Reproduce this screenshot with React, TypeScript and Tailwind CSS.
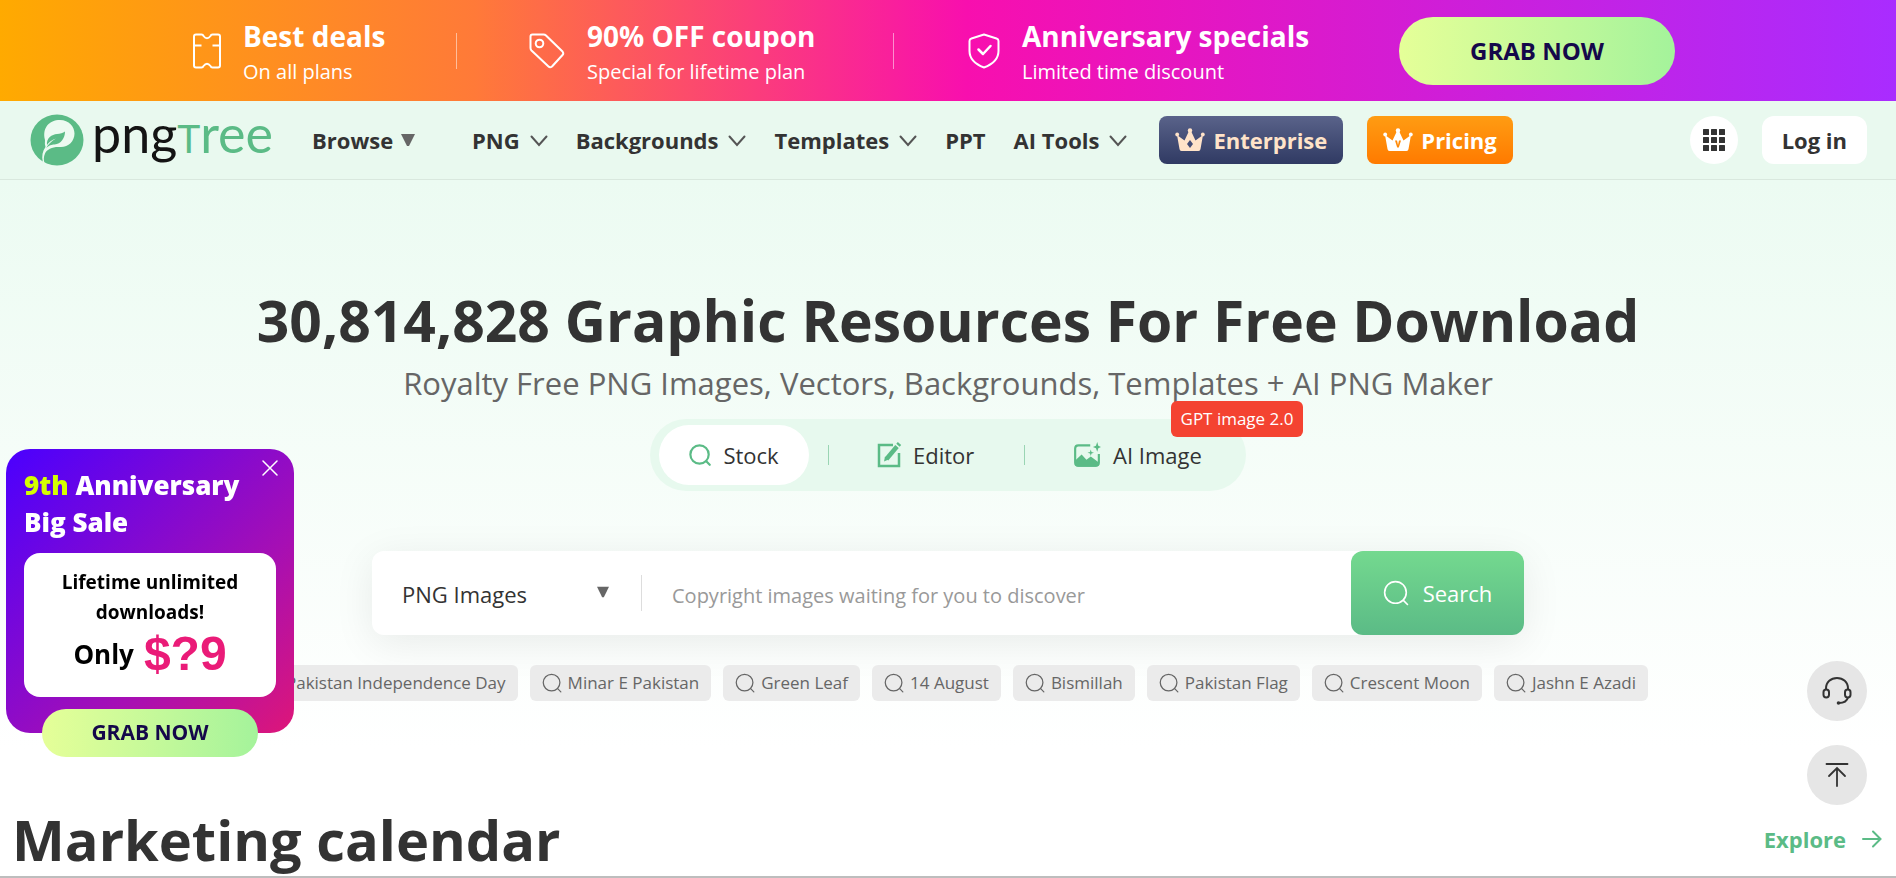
import React, { useState } from 'react';

const CHIPS = [
  'Pakistan Independence Day',
  'Minar E Pakistan',
  'Green Leaf',
  '14 August',
  'Bismillah',
  'Pakistan Flag',
  'Crescent Moon',
  'Jashn E Azadi',
];

const MENU = [
  { label: 'PNG', arrow: true },
  { label: 'Backgrounds', arrow: true },
  { label: 'Templates', arrow: true },
  { label: 'PPT', arrow: false },
  { label: 'AI Tools', arrow: true },
];

function SearchIcon({ className, stroke = 1.5 }: { className: string; stroke?: number }) {
  return (
    <svg viewBox="0 0 24 24" fill="none" stroke="currentColor" strokeWidth={stroke} strokeLinecap="round" className={className}>
      <circle cx="11.5" cy="11.5" r="10" />
      <path d="M18.8 18.8l3.8 3.8" />
    </svg>
  );
}

function ChevronIcon() {
  return (
    <svg viewBox="0 0 18 12" fill="none" stroke="#555" strokeWidth="2" strokeLinecap="round" className="mt-0.5 h-3 w-[18px]">
      <path d="M1.5 1.5L9 10L16.5 1.5" />
    </svg>
  );
}

function TriangleIcon({ className }: { className: string }) {
  return (
    <svg viewBox="0 0 14 12" fill="#666" className={className}>
      <path d="M0 0H14L8 12H6Z" />
    </svg>
  );
}

function TicketIcon() {
  return (
    <svg viewBox="0 0 28 36" fill="none" stroke="white" strokeWidth="2" strokeLinejoin="round" className="h-9 w-7">
      <path d="M3 1.5H8.5Q10 1.5 10.5 3Q14 7.500 17.5 3Q18 1.5 19.5 1.5H25Q27 1.5 27 3.5V32.5Q27 34.5 25 34.5H19.5Q18 34.5 17.5 33Q14 28.5 10.5 33Q10 34.5 8.5 34.5H3Q1 34.5 1 32.5V3.5Q1 1.5 3 1.5Z" />
      <path d="M1 12.5H8.5M19.5 12.5H27" />
    </svg>
  );
}

function TagIcon() {
  return (
    <svg viewBox="0 0 36 36" fill="none" stroke="white" strokeWidth="2" strokeLinejoin="round" className="size-9">
      <path d="M3.5 1.5H14.5Q16 1.5 17 2.5L33.5 18.5Q35 20.5 33.5 22L23 33.5Q21 35 19.5 33.5L2.5 17.5Q1.5 16.5 1.5 15V3.5Q1.5 1.5 3.5 1.5Z" />
      <circle cx="10.5" cy="10.5" r="3.8" />
    </svg>
  );
}

function ShieldIcon() {
  return (
    <svg viewBox="0 0 32 36" fill="none" stroke="white" strokeWidth="2" strokeLinejoin="round" strokeLinecap="round" className="h-9 w-8">
      <path d="M16 1.5L28.5 5.5Q30.5 6.2 30.5 8V18Q30.5 29 16 34.5Q1.5 29 1.5 18V8Q1.5 6.2 3.5 5.5Z" />
      <path d="M10.5 16.5L15 21L22.5 13" strokeWidth="2.5" />
    </svg>
  );
}

function CrownIcon({ color, gem, gemColor }: { color: string; gem: string; gemColor: string }) {
  return (
    <svg viewBox="0 0 30 24" className="h-6 w-[30px]">
      <g fill={color}>
        <circle cx="15" cy="2.5" r="2.2" />
        <circle cx="2.2" cy="6.5" r="1.9" />
        <circle cx="27.8" cy="6.5" r="1.9" />
        <path d="M2 7L9.5 12.5L14 3H16L20.5 12.5L28 7L25.5 21Q25.3 23 23.5 23H6.5Q4.7 23 4.5 21Z" />
      </g>
      <path d={gem} fill={gemColor} />
    </svg>
  );
}

function Logo() {
  return (
    <a href="#" className="flex w-[242px] items-center gap-2">
      <svg viewBox="0 0 54 52" className="h-[52px] w-[54px] shrink-0">
        <ellipse cx="27" cy="26" rx="26.5" ry="25.5" fill="#5bbb86" />
        {/* white "P" bowl that runs down into the stem */}
        <path d="M15 26C12 14 19 6 30 6C39 6 44.5 12.5 44.5 19.5C44.5 27.5 38 33.500 30 33C23 32.500 17 35 15 39.5C13.500 43 13.600 46 14.500 49L12.800 48C11.500 42 12.500 37 15.500 33Q14.500 30 15 26Z" fill="#edfaf1" />
        <path d="M17 31C16 24 22 20.5 27 20C30 19.6 33 19 35 17.5C35 24 31 30 24.5 30.5C21.5 30.7 19 31 16 34.5C18 30.5 21.5 27 26 24.5C21.5 26 19 28 17 31Z" fill="#5bbb86" />
      </svg>
      <span className="pb-2.5 font-[Lato,sans-serif] text-[52px] leading-[52px] font-normal text-[#141414]">
        png
        <span className="text-[#5bbb86]">
          <span className="text-[39px] uppercase">t</span>ree
        </span>
      </span>
    </a>
  );
}

function PromoItem({ icon, title, note }: { icon: React.ReactNode; title: string; note: string }) {
  return (
    <div className="flex items-center gap-[22px]">
      {icon}
      <div className="pt-1.5">
        <div className="text-[28px] leading-9 font-bold whitespace-nowrap">{title}</div>
        <div className="text-xl leading-9 whitespace-nowrap">{note}</div>
      </div>
    </div>
  );
}

function PromoBanner() {
  return (
    <div className="flex h-[101px] items-center bg-[linear-gradient(90deg,#ffaa00_0%,#ff7a38_25%,#f80fae_51%,#a92cff_100%)] pl-[193px] text-white">
      <div className="w-[263px]">
        <PromoItem icon={<TicketIcon />} title="Best deals" note="On all plans" />
      </div>
      <div className="h-9 w-px bg-white/50" />
      <div className="w-[436px] pl-[72px]">
        <PromoItem icon={<TagIcon />} title="90% OFF coupon" note="Special for lifetime plan" />
      </div>
      <div className="h-9 w-px bg-white/50" />
      <div className="w-[505px] pl-[74px]">
        <PromoItem icon={<ShieldIcon />} title="Anniversary specials" note="Limited time discount" />
      </div>
      <button className="h-[68px] w-[276px] rounded-full bg-linear-to-r from-[#e5ff98] to-[#a4f39b] text-2xl font-bold text-[#14084a]">
        GRAB NOW
      </button>
    </div>
  );
}

function Header() {
  return (
    <header className="flex h-[79px] items-center border-b border-[#d9e8de] bg-[#e9f9ef] pr-[29px] pl-[30px] text-[22px] font-bold text-[#333]">
      <Logo />
      <button className="ml-10 flex w-[160px] items-center gap-2">
        Browse
        <TriangleIcon className="h-3 w-3.5" />
      </button>
      <nav className="flex items-center gap-7">
        {MENU.map(item => (
          <button key={item.label} className="flex items-center gap-2.5 whitespace-nowrap">
            {item.label}
            {item.arrow && <ChevronIcon />}
          </button>
        ))}
      </nav>
      <a href="#" className="ml-8 flex h-12 items-center gap-2 rounded-lg bg-linear-to-b from-[#5a638a] to-[#303a63] px-4 text-[#ffe3c9]">
        <CrownIcon color="#ffe3c9" gem="M15 12L18 16L15 20L12 16Z" gemColor="#434c76" />
        Enterprise
      </a>
      <a href="#" className="ml-6 flex h-12 items-center gap-2 rounded-lg bg-linear-to-b from-[#ff9c12] to-[#ff7a00] px-4 text-white">
        <CrownIcon color="#fff" gem="M12 12.5H14L15 17L16 12.5H18L15.8 19.5H14.2Z" gemColor="#ff8a08" />
        Pricing
      </a>
      <div className="ml-auto flex items-center gap-6">
        <button aria-label="Apps" className="flex size-12 items-center justify-center rounded-full bg-white">
          <svg viewBox="0 0 24 24" fill="#333" className="size-6">
            {[1, 9, 17].map(y => [1, 9, 17].map(x => <rect key={`${x}-${y}`} x={x} y={y} width="6" height="6" rx="0.5" />))}
          </svg>
        </button>
        <button className="h-12 rounded-xl bg-white px-5 whitespace-nowrap">Log in</button>
      </div>
    </header>
  );
}

function ModeTabs() {
  return (
    <div className="relative mx-auto flex h-[72px] w-[596px] items-center rounded-full bg-[#e7f9ee] pl-[9px] text-[22px] text-[#333]">
      <button className="flex h-[60px] w-[150px] items-center justify-center gap-3 rounded-full bg-white">
        <SearchIcon className="size-[22px] text-[#5bbb86]" stroke={2.4} />
        Stock
      </button>
      <span className="ml-[19px] h-5 w-px bg-[#9ad5b3]" />
      <button className="flex w-[195px] items-center gap-2.5 pl-12">
        <svg viewBox="0 0 26 26" className="size-[26px]" fill="none" stroke="#5bbb86">
          <path d="M16 3H2V24H22V11" strokeWidth="2.5" />
          <path d="M9.5 17L20 4.5" strokeWidth="4.5" />
          <path d="M21 3.2L22.5 1.5" strokeWidth="4.5" />
          <path d="M7 19.5L8 14.5L11.5 17.5Z" fill="#5bbb86" stroke="none" />
        </svg>
        Editor
      </button>
      <span className="h-5 w-px bg-[#9ad5b3]" />
      <button className="flex items-center gap-3 pl-12 whitespace-nowrap">
        <svg viewBox="0 0 26 26" className="size-7" fill="#5bbb86">
          <path d="M16 4H5Q2 4 2 7V20Q2 23 5 23H21Q24 23 24 20V12" fill="none" stroke="#5bbb86" strokeWidth="2" />
          <path d="M2 21V18L8 12.5L12.5 17.5L16.5 14.5L24 20V22Q23 24 21 24H5Q2 24 2 21Z" />
          <path d="M22.5 1L23.5 4.3L26 5.5L23.5 6.7L22.5 10L21.3 6.7L18.5 5.5L21.3 4.3Z" />
          <path d="M16.5 8L17.2 10.3L19.5 11L17.2 11.7L16.5 14L15.8 11.7L13.5 11L15.8 10.3Z" />
        </svg>
        AI Image
      </button>
      <span className="absolute -top-[18px] left-[521px] flex h-9 w-[132px] items-center justify-center rounded-md bg-[#f44331] text-[17px] whitespace-nowrap text-white">
        GPT image 2.0
      </span>
    </div>
  );
}

function SearchBar() {
  const [query, setQuery] = useState('');

  return (
    <form className="mx-auto mt-[60px] flex h-[84px] w-[1152px] max-w-full items-center rounded-xl bg-white shadow-[0_8px_40px_rgba(0,0,0,0.08)]">
      <div className="relative w-[269px]">
        <select aria-label="Category" className="w-full appearance-none bg-transparent pt-0.5 pl-[30px] text-[22px] leading-8 text-[#333] outline-none">
          <option>PNG Images</option>
        </select>
        <TriangleIcon className="pointer-events-none absolute top-2.5 right-8 h-3 w-3" />
      </div>
      <div className="h-9 w-px bg-[#ddd]" />
      <input
        aria-label="Search"
        value={query}
        onChange={e => setQuery(e.target.value)}
        placeholder="Copyright images waiting for you to discover"
        className="h-full min-w-0 flex-1 px-[30px] pt-1 text-xl text-[#333] outline-none placeholder:text-[#999]"
      />
      <button type="button" className="flex h-full w-[173px] items-center justify-center gap-3.5 rounded-xl bg-linear-to-b from-[#74d98f] to-[#5bbb86] text-[22px] text-white">
        <SearchIcon className="size-[26px]" />
        Search
      </button>
    </form>
  );
}

function SalePopup({ onClose }: { onClose: () => void }) {
  return (
    <aside className="fixed top-[449px] left-1.5 h-[284px] w-72 rounded-3xl bg-[linear-gradient(135deg,#4a00ff_0%,#a60fb4_65%,#de1678_100%)] px-[18px] pt-[18px]">
      <button aria-label="Close" onClick={onClose} className="absolute top-[11px] right-4 text-white">
        <svg viewBox="0 0 16 16" fill="none" stroke="currentColor" strokeWidth="1.5" strokeLinecap="round" className="size-4">
          <path d="M1 1L15 15M15 1L1 15" />
        </svg>
      </button>
      <h2 className="text-[26px] leading-[37px] font-extrabold text-white">
        <span className="text-[#d4ff00]">9th</span> Anniversary
        <br />
        Big Sale
      </h2>
      <div className="mt-3 h-36 rounded-2xl bg-white pt-3.5 text-center font-bold text-black">
        <p className="text-[19px] leading-[30px]">
          Lifetime unlimited
          <br />
          downloads!
        </p>
        <p className="flex items-center justify-center gap-2.5 text-[26px] leading-[54px]">
          Only
          <span className="font-['Liberation_Sans',sans-serif] text-5xl leading-[54px] text-[#ea1b78]">$?9</span>
        </p>
      </div>
      <button className="mx-auto mt-3 block h-12 w-[216px] rounded-full bg-linear-to-r from-[#e5ff98] to-[#a4f39b] text-[21px] font-bold text-[#14084a]">
        GRAB NOW
      </button>
    </aside>
  );
}

function App() {
  const [showPopup, setShowPopup] = useState(true);

  return (
    <div className="h-screen overflow-hidden bg-white font-['Open_Sans','Noto_Sans',sans-serif]">
      <PromoBanner />
      <Header />

      <section className="bg-linear-to-b from-[#ecfbf2] to-white pt-[98px] text-center">
        <h1 className="text-[57px] leading-[84px] font-bold whitespace-nowrap text-[#333]">
          30,814,828 Graphic Resources For Free Download
        </h1>
        <p className="pt-0.5 text-[31px] leading-[38px] whitespace-nowrap text-[#666]">
          Royalty Free PNG Images, Vectors, Backgrounds, Templates + AI PNG Maker
        </p>
        <div className="pt-[17px]">
          <ModeTabs />
        </div>
        <SearchBar />
        <div className="mt-[30px] flex justify-center gap-3 pb-12">
          {CHIPS.map(chip => (
            <a key={chip} href="#" className="flex h-9 items-center gap-1.5 rounded-md bg-[#ebebeb] px-3 text-[17px] whitespace-nowrap text-[#666]">
              <SearchIcon className="size-5" />
              {chip}
            </a>
          ))}
        </div>
      </section>

      <section className="flex items-center justify-between pt-12 pr-3.5 pl-3">
        <h2 className="text-[56px] leading-[84px] font-bold text-[#333]">Marketing calendar</h2>
        <a href="#" className="flex items-center gap-4 text-[22px] font-bold text-[#5bbb86]">
          Explore
          <svg viewBox="0 0 20 18" fill="none" stroke="currentColor" strokeWidth="2" strokeLinecap="round" className="h-[18px] w-5">
            <path d="M1 9H18.5M11 1.5L18.5 9L11 16.5" />
          </svg>
        </a>
      </section>

      {showPopup && <SalePopup onClose={() => setShowPopup(false)} />}

      {/* Floating actions */}
      <div className="fixed right-[29px] bottom-[73px] flex flex-col gap-6">
        <button aria-label="Support" className="flex size-[60px] items-center justify-center rounded-full bg-[#e6e6e6]">
          <svg viewBox="0 0 30 30" fill="none" stroke="#333" strokeWidth="2" className="size-[30px]">
            <path d="M4 13.5V12.5C4 6 9 2 15 2S26 6 26 12.5V13.5" />
            <rect x="1.5" y="13.5" width="5.5" height="8" rx="2.7" />
            <rect x="23" y="13.5" width="5.5" height="8" rx="2.7" />
            <path d="M26 21.5C25 25 21.5 27 17 27" />
            <circle cx="16.5" cy="27" r="1.8" fill="#333" stroke="none" />
          </svg>
        </button>
        <button aria-label="Back to top" className="flex size-[60px] items-center justify-center rounded-full bg-[#e6e6e6]">
          <svg viewBox="0 0 24 24" fill="none" stroke="#333" strokeWidth="1.8" strokeLinecap="round" className="size-6">
            <path d="M1.5 1H22.5M12 23V5.5M4 13L12 5L20 13" />
          </svg>
        </button>
      </div>
      <div className="fixed inset-x-0 bottom-0 h-0.5 bg-[#bdbdbd]" />
    </div>
  );
}

export default App;
